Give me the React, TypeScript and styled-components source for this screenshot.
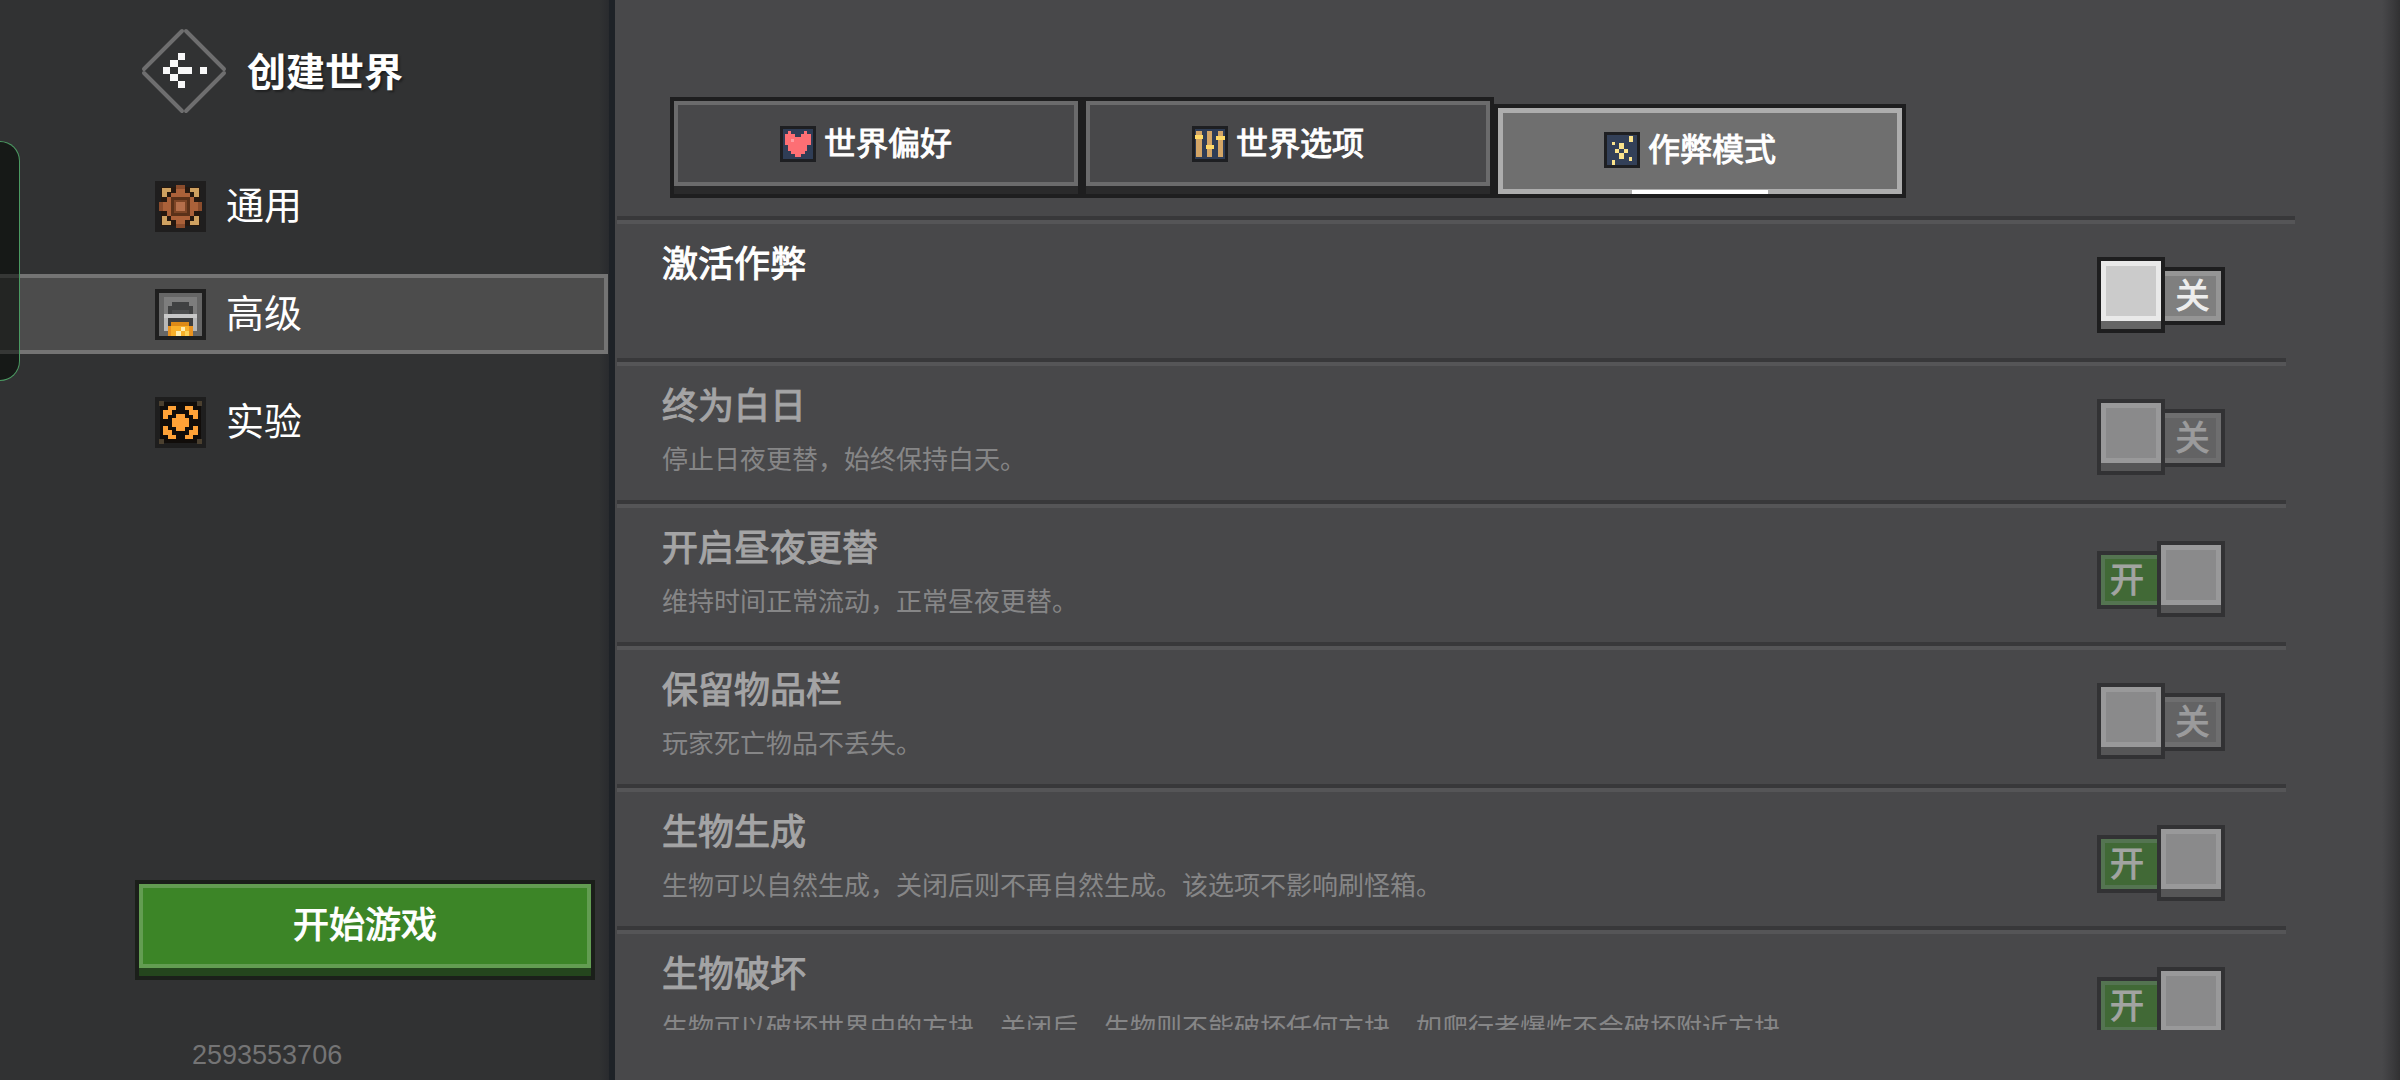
import React, { useState } from "react";
import styled, { createGlobalStyle, css } from "styled-components";

const color = {
  ink: "#1e1e1f",
  side: "#313233",
  panel: "#48484a",
  grooveDark: "#38383a",
  grooveLight: "#555557",
  white: "#ffffff",
};

/* The CJK family may come without a medium cut, so a hairline outline gives that weight. */
const mediumWeight = css`
  font-weight: 400;
  -webkit-text-stroke: 1px currentColor;
`;

const GlobalStyle = createGlobalStyle`
  *, *::before, *::after { box-sizing: border-box; }
  body {
    margin: 0;
    background: ${color.panel};
    color: ${color.white};
    font-family: "Liberation Sans", "Noto Sans CJK SC", sans-serif;
  }
  h1, h2, p, ul { margin: 0; padding: 0; }
  ul { list-style: none; }
  button { font: inherit; color: inherit; border: 0; padding: 0; background: none; cursor: pointer; }
`;

const Screen = styled.div`
  position: relative;
  display: flex;
  height: 100vh;
  overflow: hidden;
`;

/* ---------- sidebar ---------- */

const Sidebar = styled.aside`
  flex: 0 0 615px;
  display: flex;
  flex-direction: column;
  background: linear-gradient(to left, #1e2227 6px, #292b2e 6px, ${color.side} 16px);
`;

const SideHeader = styled.header`
  display: flex;
  align-items: center;
  gap: 20px;
  padding: 28px 0 0 141px;
`;

const BackButton = styled.button`
  display: block;
  height: 86px;
`;

const PageTitle = styled.h1`
  padding-top: 4px;
  font-size: 39px;
  line-height: 56px;
  font-weight: 700;
  text-shadow: 2px 2px 2px rgba(0, 0, 0, 0.35);
`;

const SideNav = styled.nav`
  display: flex;
  flex-direction: column;
  gap: 28px;
  padding: 52px 7px 0 0;
`;

const NavItem = styled.button<{ $active?: boolean }>`
  display: flex;
  align-items: center;
  gap: 20px;
  height: 80px;
  padding-left: 155px;
  font-size: 38px;
  line-height: 56px;
  border: 4px solid transparent;
  border-left: 0;
  ${(p) =>
    p.$active &&
    css`
      background: #4c4c4c;
      border-color: #747474;
    `}
`;

const SideFooter = styled.footer`
  margin-top: auto;
  padding: 0 20px 7px 135px;
`;

const StartButton = styled.button`
  display: block;
  width: 100%;
  border: 4px solid #1b1f1a;
  background: #24451d;
  padding-bottom: 8px;
`;

const StartFace = styled.span`
  display: block;
  padding: 12px 0;
  border: 4px solid #639d52;
  background: #3c8527;
  font-size: 36px;
  line-height: 52px;
  ${mediumWeight}
`;

const UserId = styled.p`
  padding: 57px 0 0 57px;
  font-size: 27px;
  line-height: 36px;
  color: #747475;
`;

const EdgeHandle = styled.div`
  position: absolute;
  left: 0;
  top: 141px;
  width: 20px;
  height: 240px;
  border: 1px solid #4b9a62;
  border-left: 0;
  border-radius: 0 20px 20px 0;
  background: rgba(0, 3, 0, 0.54);
`;

/* ---------- main panel ---------- */

const Main = styled.main`
  flex: 1;
  min-width: 0;
  display: flex;
  flex-direction: column;
  padding: 97px 105px 50px 2px;
  background: linear-gradient(to left, #313132, #3c3c3e 8px, ${color.panel} 18px);
`;

const Tabs = styled.div`
  display: flex;
  align-items: flex-end;
  padding-left: 53px;
`;

const Tab = styled.button<{ $active?: boolean }>`
  flex: 0 1 412px;
  border: 4px solid ${color.ink};
  background: #2a2a2b;
  padding-bottom: ${(p) => (p.$active ? 0 : 8)}px;
`;

const TabFace = styled.span<{ $active?: boolean }>`
  position: relative;
  display: flex;
  align-items: center;
  justify-content: center;
  gap: 8px;
  height: ${(p) => (p.$active ? 86 : 85)}px;
  padding: ${(p) => (p.$active ? "0 20px 3px 0" : "1px 20px 0 0")};
  border: ${(p) => (p.$active ? "5px solid #adadad" : "4px solid #6b6b6c")};
  background: ${(p) => (p.$active ? "#6f6f6f" : color.panel)};
  font-size: 32px;
  line-height: 44px;
  ${mediumWeight}
  ${(p) =>
    p.$active &&
    css`
      &::after {
        content: "";
        position: absolute;
        left: 50%;
        bottom: -5px;
        width: 136px;
        height: 4px;
        margin-left: -68px;
        background: ${color.white};
      }
    `}
`;

const ListFrame = styled.section`
  flex: 1;
  min-height: 0;
  display: flex;
  flex-direction: column;
  margin-top: 18px;
  border-top: 4px solid ${color.grooveDark};
`;

const OptionList = styled.ul`
  flex: 1;
  min-height: 0;
  overflow-y: auto;
  scrollbar-width: none;
  border-top: 4px solid ${color.grooveLight};
`;

const OptionRow = styled.li`
  margin-right: 9px;
  & + &::before {
    content: "";
    display: block;
    height: 8px;
    background: linear-gradient(${color.grooveDark} 50%, ${color.grooveLight} 50%);
  }
`;

const OptionBody = styled.div<{ $dim: boolean }>`
  display: flex;
  justify-content: space-between;
  align-items: flex-start;
  height: 134px;
  padding: 15px 61px 0 45px;
  opacity: ${(p) => (p.$dim ? 0.5 : 1)};
`;

const OptionTitle = styled.h2`
  font-size: 36px;
  line-height: 52px;
  ${mediumWeight}
`;

const OptionNote = styled.p`
  margin-top: 8px;
  font-size: 26px;
  line-height: 38px;
  color: #c4c4c4;
`;

const Toggle = styled.label<{ $on: boolean }>`
  position: relative;
  display: flex;
  flex-direction: ${(p) => (p.$on ? "row-reverse" : "row")};
  align-items: flex-start;
  margin-top: 18px;
`;

const ToggleInput = styled.input`
  position: absolute;
  inset: 0;
  width: 100%;
  height: 100%;
  margin: 0;
  opacity: 0;
`;

const Knob = styled.span`
  display: block;
  width: 68px;
  height: 76px;
  padding-bottom: 8px;
  border: 4px solid ${color.ink};
  background: #656565;
  &::before {
    content: "";
    display: block;
    height: 60px;
    border: 5px solid #e9e9e9;
    background: #cbcbcb;
  }
`;

const Track = styled.span<{ $on: boolean }>`
  display: flex;
  width: 60px;
  height: 58px;
  margin-top: 10px;
  border: 4px solid ${color.ink};
  ${(p) => (p.$on ? "border-right: 0;" : "border-left: 0;")}
`;

const TrackFace = styled.span<{ $on: boolean }>`
  flex: 1;
  display: flex;
  align-items: center;
  justify-content: center;
  font-size: 34px;
  line-height: 40px;
  ${mediumWeight}
  ${(p) =>
    p.$on
      ? css`
          border: 4px solid #60a058;
          border-right: 0;
          padding-right: 8px;
          background: #3c8b24;
          color: #fbfff8;
        `
      : css`
          border: 5px solid #959595;
          border-left: 0;
          padding-left: 4px;
          background: #7f7f7f;
          color: #ededed;
        `}
`;

/* ---------- pixel icons ---------- */

type Cell = [x: number, y: number, w: number, h: number, fill: string];

function PixelArt({ size, box, cells }: { size: number; box: number; cells: Cell[] }) {
  return (
    <svg width={size} height={size} viewBox={`0 0 ${box} ${box}`} shapeRendering="crispEdges" aria-hidden="true">
      {cells.map(([x, y, w, h, fill], i) => (
        <rect key={i} x={x} y={y} width={w} height={h} fill={fill} />
      ))}
    </svg>
  );
}

function mirror(cells: Cell[], span: number): Cell[] {
  return cells.flatMap(([x, y, w, h, f]): Cell[] => [
    [x, y, w, h, f],
    [span - x - w, y, w, h, f],
    [x, span - y - h, w, h, f],
    [span - x - w, span - y - h, w, h, f],
  ]);
}

const tan = "#cfa160";
const rust = "#ab6139";
const bark = "#5a3119";
const gearCells: Cell[] = [
  [0, 0, 150, 150, "#1f1e1e"],
  [18, 18, 114, 114, "#26180f"],
  ...mirror([[20, 21, 26, 12, tan], [20, 33, 14, 14, tan], [36, 47, 12, 14, bark], [47, 34, 14, 14, bark]], 150),
  [61, 12, 28, 126, "#8a4c2c"],
  [11, 61, 128, 28, "#8a4c2c"],
  [61, 24, 28, 102, rust],
  [23, 61, 104, 28, rust],
  [47, 34, 56, 82, rust],
  [34, 47, 82, 56, rust],
  [47, 47, 56, 56, bark],
  [57, 57, 36, 36, "#7d4526"],
  [61, 61, 28, 28, "#b56f4b"],
];

const furnaceCells: Cell[] = [
  [0, 0, 152, 152, "#1f1f1f"],
  [13, 13, 126, 126, "#666666"],
  [27, 25, 98, 60, "#7d7d7d"],
  [52, 39, 50, 14, "#404142"],
  [38, 52, 76, 22, "#404142"],
  [50, 64, 52, 10, "#4c4d4e"],
  [27, 74, 99, 12, "#c8c8c8"],
  [27, 86, 12, 38, "#b8b8b8"],
  [114, 86, 12, 38, "#b8b8b8"],
  [39, 86, 75, 53, "#3e3e3e"],
  [49, 97, 53, 14, "#dd8a17"],
  [39, 111, 75, 28, "#ea9320"],
  [49, 111, 53, 28, "#f9b029"],
  [76, 113, 13, 12, "#ffeeb0"],
  [89, 125, 11, 14, "#ffd257"],
  [62, 125, 14, 14, "#ffeeb0"],
];

const flame = "#ffa237";
const labCells: Cell[] = [
  [0, 0, 150, 150, "#1e1e1e"],
  [14, 14, 122, 122, "#110d0a"],
  ...mirror(
    [
      [12, 12, 14, 14, "#4b402f"],
      [38, 26, 25, 13, flame],
      [24, 38, 26, 14, flame],
      [24, 52, 14, 13, flame],
    ],
    150
  ),
  [62, 50, 26, 50, flame],
  [49, 62, 52, 26, flame],
];

const navy = "#2f3d56";
const coral = "#fd6f74";
const heartCells: Cell[] = [
  [0, 0, 108, 108, "#1e1f22"],
  [10, 10, 88, 88, navy],
  [24, 14, 10, 10, coral],
  [72, 14, 10, 10, coral],
  [14, 24, 30, 10, coral],
  [62, 24, 30, 10, coral],
  [14, 34, 78, 24, coral],
  [24, 58, 58, 10, coral],
  [24, 68, 58, 8, coral],
  [34, 76, 40, 8, coral],
  [44, 84, 18, 8, coral],
  [32, 40, 10, 9, "#ff9aa0"],
];

const sliderCells: Cell[] = [
  [0, 0, 108, 108, "#1e1f22"],
  [10, 10, 88, 88, navy],
  [13, 15, 16, 77, "#d3a566"],
  [45, 15, 16, 77, "#d3a566"],
  [77, 15, 16, 77, "#d3a566"],
  [8, 27, 26, 13, "#ffd967"],
  [41, 57, 26, 12, "#ffd967"],
  [72, 30, 26, 12, "#ffd967"],
];

const spark = "#fbe38c";
const sparkleCells: Cell[] = [
  [0, 0, 108, 108, "#1e1f22"],
  [10, 10, 88, 88, "#334058"],
  [23, 30, 11, 10, spark],
  [74, 12, 12, 18, spark],
  [46, 33, 13, 18, spark],
  [34, 51, 12, 12, spark],
  [59, 51, 13, 12, spark],
  [46, 63, 13, 18, spark],
  [74, 75, 11, 11, spark],
  [23, 84, 11, 14, spark],
];

const sideIcon = (cells: Cell[]) => <PixelArt size={51} box={cells[0][2]} cells={cells} />;
const tabIcon = (cells: Cell[]) => <PixelArt size={36} box={108} cells={cells} />;

function BackIcon() {
  const pixels = [[2, 0], [1, 1], [0, 2], [2, 2], [3, 2], [5, 2], [1, 3], [2, 4]];
  return (
    <svg width="86" height="86" viewBox="0 0 86 86" aria-hidden="true">
      <path
        d="M3 41 L41 3 M45 3 L83 41 M83 45 L45 83 M41 83 L3 45"
        stroke="#6e6e6f"
        strokeWidth="4"
        strokeLinecap="round"
        fill="none"
      />
      <g shapeRendering="crispEdges" fill="#f8f8f8">
        {pixels.map(([c, r]) => (
          <rect key={`${c}-${r}`} x={22 + c * 7.3} y={25 + r * 7} width="7.3" height="7" />
        ))}
      </g>
    </svg>
  );
}

/* ---------- data ---------- */

const sections = [
  { name: "通用", icon: gearCells },
  { name: "高级", icon: furnaceCells },
  { name: "实验", icon: labCells },
];

const tabs = [
  { name: "世界偏好", icon: heartCells },
  { name: "世界选项", icon: sliderCells },
  { name: "作弊模式", icon: sparkleCells },
];

const options = [
  { id: "cheats", title: "激活作弊", note: "", on: false },
  { id: "always-day", title: "终为白日", note: "停止日夜更替，始终保持白天。", on: false },
  { id: "day-cycle", title: "开启昼夜更替", note: "维持时间正常流动，正常昼夜更替。", on: true },
  { id: "keep-inventory", title: "保留物品栏", note: "玩家死亡物品不丢失。", on: false },
  { id: "mob-spawning", title: "生物生成", note: "生物可以自然生成，关闭后则不再自然生成。该选项不影响刷怪箱。", on: true },
  {
    id: "mob-griefing",
    title: "生物破坏",
    note: "生物可以破坏世界中的方块，关闭后，生物则不能破坏任何方块，如爬行者爆炸不会破坏附近方块",
    on: true,
  },
];

export default function App() {
  const [section, setSection] = useState(1);
  const [tab, setTab] = useState(2);
  const [values, setValues] = useState(options.map((o) => o.on));
  const unlocked = values[0];

  return (
    <>
      <GlobalStyle />
      <Screen>
        <Sidebar>
          <SideHeader>
            <BackButton aria-label="返回">
              <BackIcon />
            </BackButton>
            <PageTitle>创建世界</PageTitle>
          </SideHeader>
          <SideNav>
            {sections.map((s, i) => (
              <NavItem key={s.name} $active={i === section} onClick={() => setSection(i)}>
                {sideIcon(s.icon)}
                {s.name}
              </NavItem>
            ))}
          </SideNav>
          <SideFooter>
            <StartButton>
              <StartFace>开始游戏</StartFace>
            </StartButton>
            <UserId>2593553706</UserId>
          </SideFooter>
        </Sidebar>

        <Main>
          <Tabs role="tablist">
            {tabs.map((t, i) => (
              <Tab key={t.name} role="tab" aria-selected={i === tab} $active={i === tab} onClick={() => setTab(i)}>
                <TabFace $active={i === tab}>
                  {tabIcon(t.icon)}
                  {t.name}
                </TabFace>
              </Tab>
            ))}
          </Tabs>
          <ListFrame>
            <OptionList>
              {options.map((o, i) => (
                <OptionRow key={o.id}>
                  <OptionBody $dim={i > 0 && !unlocked}>
                    <div>
                      <OptionTitle id={o.id}>{o.title}</OptionTitle>
                      {o.note && <OptionNote>{o.note}</OptionNote>}
                    </div>
                    <Toggle $on={values[i]}>
                      <ToggleInput
                        type="checkbox"
                        role="switch"
                        aria-labelledby={o.id}
                        checked={values[i]}
                        disabled={i > 0 && !unlocked}
                        onChange={() => setValues(values.map((v, k) => (k === i ? !v : v)))}
                      />
                      <Knob />
                      <Track $on={values[i]}>
                        <TrackFace $on={values[i]}>{values[i] ? "开" : "关"}</TrackFace>
                      </Track>
                    </Toggle>
                  </OptionBody>
                </OptionRow>
              ))}
            </OptionList>
          </ListFrame>
        </Main>
        <EdgeHandle />
      </Screen>
    </>
  );
}
